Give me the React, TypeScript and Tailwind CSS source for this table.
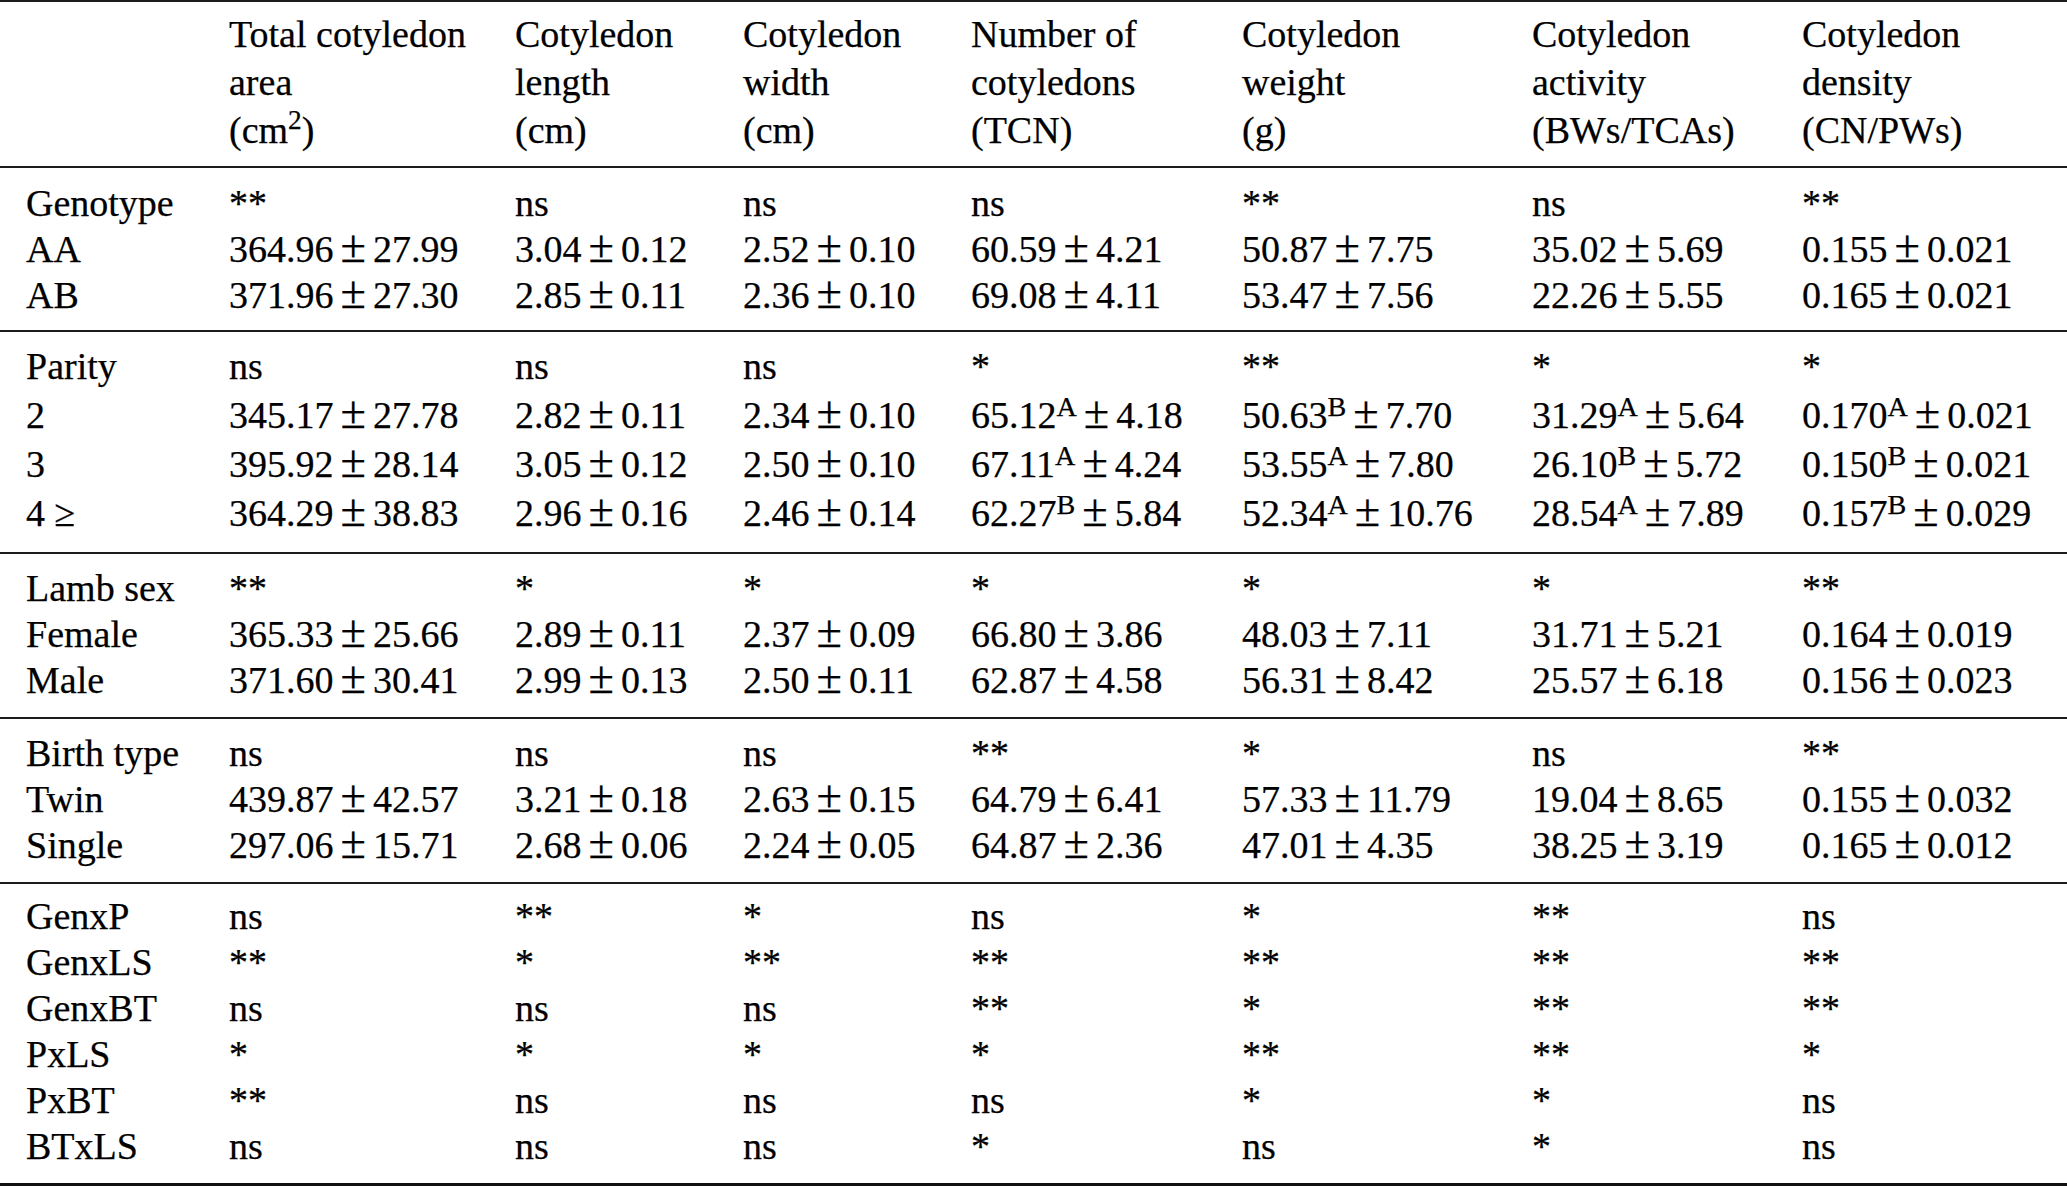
import React from "react";

const grid =
  "grid grid-cols-[203px_286px_228px_228px_271px_290px_270px_1fr] pl-[26px]";

const header: string[][] = [
  ["Total cotyledon", "area", "(cm2)"],
  ["Cotyledon", "length", "(cm)"],
  ["Cotyledon", "width", "(cm)"],
  ["Number of", "cotyledons", "(TCN)"],
  ["Cotyledon", "weight", "(g)"],
  ["Cotyledon", "activity", "(BWs/TCAs)"],
  ["Cotyledon", "density", "(CN/PWs)"],
];

type Section = { pt: string; pb: string; rows: string[][] };

const sections: Section[] = [
  {
    pt: "pt-[12px]",
    pb: "pb-[12px]",
    rows: [
      ["Genotype", "**", "ns", "ns", "ns", "**", "ns", "**"],
      ["AA", "364.96|27.99", "3.04|0.12", "2.52|0.10", "60.59|4.21", "50.87|7.75", "35.02|5.69", "0.155|0.021"],
      ["AB", "371.96|27.30", "2.85|0.11", "2.36|0.10", "69.08|4.11", "53.47|7.56", "22.26|5.55", "0.165|0.021"],
    ],
  },
  {
    pt: "pt-[11px]",
    pb: "pb-[16px]",
    rows: [
      ["Parity", "ns", "ns", "ns", "*", "**", "*", "*"],
      ["2", "345.17|27.78", "2.82|0.11", "2.34|0.10", "65.12^A|4.18", "50.63^B|7.70", "31.29^A|5.64", "0.170^A|0.021"],
      ["3", "395.92|28.14", "3.05|0.12", "2.50|0.10", "67.11^A|4.24", "53.55^A|7.80", "26.10^B|5.72", "0.150^B|0.021"],
      ["4 \u2265", "364.29|38.83", "2.96|0.16", "2.46|0.14", "62.27^B|5.84", "52.34^A|10.76", "28.54^A|7.89", "0.157^B|0.029"],
    ],
  },
  {
    pt: "pt-[11px]",
    pb: "pb-[14px]",
    rows: [
      ["Lamb sex", "**", "*", "*", "*", "*", "*", "**"],
      ["Female", "365.33|25.66", "2.89|0.11", "2.37|0.09", "66.80|3.86", "48.03|7.11", "31.71|5.21", "0.164|0.019"],
      ["Male", "371.60|30.41", "2.99|0.13", "2.50|0.11", "62.87|4.58", "56.31|8.42", "25.57|6.18", "0.156|0.023"],
    ],
  },
  {
    pt: "pt-[11px]",
    pb: "pb-[14px]",
    rows: [
      ["Birth type", "ns", "ns", "ns", "**", "*", "ns", "**"],
      ["Twin", "439.87|42.57", "3.21|0.18", "2.63|0.15", "64.79|6.41", "57.33|11.79", "19.04|8.65", "0.155|0.032"],
      ["Single", "297.06|15.71", "2.68|0.06", "2.24|0.05", "64.87|2.36", "47.01|4.35", "38.25|3.19", "0.165|0.012"],
    ],
  },
  {
    pt: "pt-[9px]",
    pb: "pb-[14px]",
    rows: [
      ["GenxP", "ns", "**", "*", "ns", "*", "**", "ns"],
      ["GenxLS", "**", "*", "**", "**", "**", "**", "**"],
      ["GenxBT", "ns", "ns", "ns", "**", "*", "**", "**"],
      ["PxLS", "*", "*", "*", "*", "**", "**", "*"],
      ["PxBT", "**", "ns", "ns", "ns", "*", "*", "ns"],
      ["BTxLS", "ns", "ns", "ns", "*", "ns", "*", "ns"],
    ],
  },
];

function Cell({ value }: { value: string }) {
  if (!value.includes("|")) return <span>{value}</span>;
  const [mean, sd] = value.split("|");
  const [num, letter] = mean.split("^");
  return (
    <span className="whitespace-nowrap">
      {num}
      {letter && (
        <sup className="text-[0.74em] top-[-0.44em]">{letter}</sup>
      )}
      <span className="mx-[7px] text-[1.22em] leading-[0]">±</span>
      {sd}
    </span>
  );
}

function Line() {
  return <div className="h-[2px] bg-[#1c1c1c]" />;
}

export default function App() {
  return (
    <div className="w-[2067px] h-[1188px] bg-white text-black font-['Liberation_Serif','Times_New_Roman',serif] text-[38px] [-webkit-text-stroke:0.25px_black] overflow-hidden">
      <Line />
      <div className={`${grid} pt-[8px] pb-[12px] leading-[48px]`}>
        <div />
        {header.map((lines, i) => (
          <div key={i} className="flex flex-col">
            {lines.map((l, j) =>
              l === "(cm2)" ? (
                <span key={j}>
                  (cm<sup className="text-[0.72em] top-[-0.5em]">2</sup>)
                </span>
              ) : (
                <span key={j}>{l}</span>
              )
            )}
          </div>
        ))}
      </div>
      {sections.map((s, si) => (
        <div key={si}>
          <Line />
          <div className={`${s.pt} ${s.pb}`}>
            {s.rows.map((row, ri) => {
              const tall = row.some((c) => c.includes("^"));
              return (
                <div
                  key={ri}
                  className={`${grid} ${tall ? "h-[49px] pt-[3px]" : "h-[46px]"} leading-[46px]`}
                >
                  {row.map((c, ci) => (
                    <div key={ci}>
                      <Cell value={c} />
                    </div>
                  ))}
                </div>
              );
            })}
          </div>
        </div>
      ))}
      <div className="h-[3px] bg-[#111]" />
    </div>
  );
}
